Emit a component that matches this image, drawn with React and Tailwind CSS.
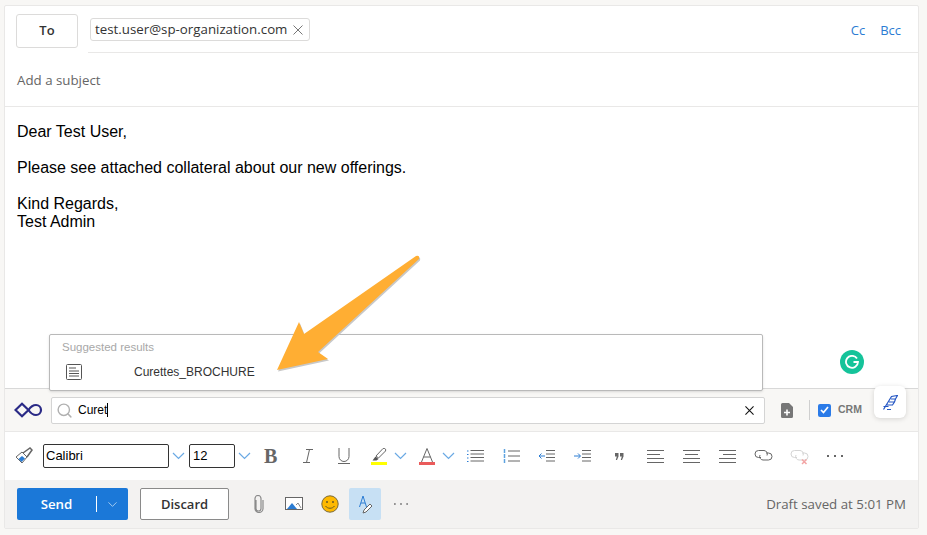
import React from 'react';
import { Search, ChevronDown } from 'lucide-react';

const segoe = { fontFamily: '"Open Sans", "Noto Sans", sans-serif' };
const arial = { fontFamily: '"Liberation Sans", sans-serif' };

const Chevron = ({ className = '' }) => (
  <svg width="13" height="8" viewBox="0 0 13 8" fill="none" className={className}>
    <path d="M1 1l5.500 5.500L12 1" stroke="#6aa9e4" strokeWidth="1.200" />
  </svg>
);

const Cross = ({ size, color, width = 1 }) => (
  <svg width={size} height={size} viewBox="0 0 10 10" fill="none" stroke={color} strokeWidth={width}>
    <path d="M.5 .5l9 9M9.500 .5l-9 9" />
  </svg>
);

const Dots = ({ w, color, r, className = '' }) => (
  <svg width={w} height="4" viewBox={`0 0 ${w} 4`} fill={color} className={className}>
    <circle cx={r} cy="2" r={r} />
    <circle cx={w / 2} cy="2" r={r} />
    <circle cx={w - r} cy="2" r={r} />
  </svg>
);

const Lines = ({ rows }) => (
  <svg width="17" height="13" viewBox="0 0 17 13" fill="none" stroke="#666" strokeWidth="1">
    {rows.map((r, i) => (
      <path key={i} d={`M${r[0]} ${i * 4 + 0.5}H${r[1]}`} />
    ))}
  </svg>
);

const BulletList = () => (
  <svg width="17" height="12" viewBox="0 0 17 12" fill="none">
    <path d="M3.500 .5H17M3.500 4H17M3.500 7.500H17M3.500 11H17" stroke="#666" />
    <path d="M0 1h1.500M0 4.500h1.500M0 8h1.500M0 11.500h1.500" stroke="#2b7cd3" />
  </svg>
);

const NumberList = () => (
  <svg width="17" height="14" viewBox="0 0 17 14" fill="none">
    <path d="M5 2h12M5 7h12M5 12h12" stroke="#666" />
    <path d="M1.500 0v14" stroke="#5da2e0" strokeWidth="1.500" strokeDasharray="4 1" />
  </svg>
);

const Indent = ({ flip }) => (
  <svg width="18" height="12" viewBox="0 0 18 12" fill="none">
    <path d="M8 0.500h9M8 4h9M8 7.500h9M8 11h9" stroke="#666" />
    {flip ? (
      <path d="M0 6h6M4 3.500L6.500 6 4 8.500" stroke="#2b7cd3" />
    ) : (
      <path d="M7 6H1M3.500 3.500L1 6l2.500 2.500" stroke="#2b7cd3" />
    )}
  </svg>
);

const LinkIcon = ({ color = '#666', off }) => (
  <svg width="19" height="17" viewBox="0 0 19 17" fill="none" stroke={color} strokeWidth="1">
    <path d="M7 9.500H4.500a3.500 3.500 0 0 1 0-7H10a3.500 3.500 0 0 1 3 5" />
    <path d="M12 5h2.500a3.500 3.500 0 0 1 0 7H9a3.500 3.500 0 0 1-3-5" />
    {off && <path d="M12 11.500l4.500 4.500M16.500 11.500L12 16" stroke="#f3a5a5" strokeWidth="1.500" />}
  </svg>
);

export default function App() {
  return (
    <div className="relative w-[927px] h-[535px] overflow-hidden bg-[#f8f7f5] pt-[5px] pl-[4px]" style={segoe}>
      <div className="w-[915px] h-[524px] flex flex-col bg-white border border-[#e9e8e7] rounded-[2px]">
        {/* To row */}
        <div className="h-[47px] flex shrink-0 pl-[11px] pr-[17px] pt-[8px]">
          <button className="w-[62px] h-[34px] bg-white border border-[#dcdbda] rounded-[3px] text-[13px] font-semibold text-[#333]">
            To
          </button>
          <div className="flex-1 ml-[10px] flex justify-between h-[39px] border-b border-[#e9e8e7] -mr-[17px] pr-[17px]">
            <div className="ml-[2px] mt-[4px] h-[23px] flex items-center gap-[6px] pl-[4px] pr-[6px] border border-[#dcdbda] rounded-[3px] text-[13.300px] text-[#333]">
              test.user@sp-organization.com
              <Cross size={10} color="#777" />
            </div>
            <div className="flex gap-[15px] mt-[7px] text-[13px] text-[#2b7cd3] h-[18px]">
              <span>Cc</span>
              <span>Bcc</span>
            </div>
          </div>
        </div>

        {/* subject */}
        <div className="h-[54px] shrink-0 flex items-center pl-[12px] pt-[2px] text-[13.300px] text-[#666] border-b border-[#e9e8e7]">
          Add a subject
        </div>

        {/* body */}
        <div className="flex-1 pl-[12px] pt-[16px] text-[16px] leading-[18px] text-black" style={arial}>
          <p>Dear Test User,</p>
          <p className="mt-[18px]">Please see attached collateral about our new offerings.</p>
          <p className="mt-[18px]">Kind Regards,</p>
          <p>Test Admin</p>
        </div>

        {/* search bar */}
        <div className="h-[44px] shrink-0 flex items-center bg-[#f8f7f5] border-t border-[#d8d8d8] border-b-[#e9e8e7] border-b pl-[9px]" style={arial}>
          <svg width="29" height="16" viewBox="0 0 29 16" fill="none" stroke="#2a2a86" strokeWidth="2.200">
            <path d="M1.500 8L8 1.800 14.500 8 8 14.200z" />
            <path d="M14.500 8c2-3 4.500-5 7.500-5a5 5 0 0 1 0 10c-3 0-5.500-2-7.500-5z" />
          </svg>
          <div className="ml-[8px] w-[714px] h-[27px] flex items-center bg-white border border-[#d4d4d4] rounded-[2px] pl-[4px] pr-[10px] text-[12px] text-black">
            <Search size={17} strokeWidth={2} className="text-[#b0b0b0]" />
            <span className="ml-[5px]">Curet</span>
            <span className="w-px h-[14px] bg-black"></span>
            <span className="ml-auto"><Cross size={9} color="#111" width={1.200} /></span>
          </div>
          <svg width="12" height="15" viewBox="0 0 12 15" className="ml-[16px]">
            <path d="M1.500 0H8l4 4v9.500a1.500 1.500 0 0 1-1.500 1.500h-9A1.500 1.500 0 0 1 0 13.500v-12A1.500 1.500 0 0 1 1.500 0z" fill="#777" />
            <path d="M6 6.500v6M3 9.500h6" stroke="#fff" strokeWidth="1.600" />
          </svg>
          <div className="ml-[16px] w-px h-[20px] bg-[#cfcfcf]"></div>
          <div className="ml-[8px] w-[13px] h-[13px] rounded-[2px] bg-[#2b7be8] flex items-center justify-center">
            <svg width="9" height="8" viewBox="0 0 9 8" fill="none">
              <path d="M1 4l2.500 2.500L8 1" stroke="#fff" strokeWidth="1.700" />
            </svg>
          </div>
          <span className="ml-[7px] text-[10.500px] font-bold text-[#777]">CRM</span>
        </div>

        {/* format toolbar */}
        <div className="h-[48px] shrink-0 flex items-center pl-[10px] text-[#666]">
          <svg width="18" height="18" viewBox="0 0 18 18" fill="none">
            <path d="M1 10l6-5 5 5-5 6z" fill="#fff" stroke="#666" />
            <path d="M3.500 12l3.500-3 3 2.500-3.500 3.500z" fill="#2b7cd3" />
            <path d="M8 6l7-5 2 2-5 7" stroke="#666" strokeWidth="1.500" />
          </svg>
          <div className="ml-[10px] w-[126px] h-[24px] border border-[#333] rounded-[2px] flex items-center pl-[2px] text-[13px] text-black" style={arial}>
            Calibri
          </div>
          <Chevron className="ml-[3px]" />
          <div className="ml-[4px] w-[46px] h-[24px] border border-[#333] rounded-[2px] flex items-center pl-[3px] text-[13px] text-black" style={arial}>
            12
          </div>
          <Chevron className="ml-[3px]" />
          <span className="ml-[13px] mr-[2px] w-[13px] text-[20px] leading-none font-bold text-[#666]" style={{ fontFamily: '"Liberation Serif", serif' }}>B</span>
          <svg width="12" height="14" viewBox="0 0 12 14" fill="none" stroke="#666" className="ml-[23px]">
            <path d="M4 .5h7M1 13.500h7M7.500 .5l-3 13" />
          </svg>
          <svg width="12" height="16" viewBox="0 0 12 16" fill="none" stroke="#666" className="ml-[24px]">
            <path d="M1 0v8.500a5 5 0 0 0 10 0V0M0 15.500h12" />
          </svg>
          <div className="ml-[21px] w-[16px] flex flex-col items-center">
            <svg width="15" height="14" viewBox="0 0 15 14">
              <path d="M4 8l7-7.500c1.500-1 3.500 1 2.500 2.500L6.500 10z" fill="none" stroke="#666" />
              <path d="M3.500 8.500l3 2.500-2 1.500H.500z" fill="#555" />
            </svg>
            <div className="w-[16px] h-[3px] bg-[#ffff00]"></div>
          </div>
          <Chevron className="ml-[7px]" />
          <div className="ml-[12px] w-[16px] flex flex-col items-center">
            <svg width="12" height="14" viewBox="0 0 12 14" fill="none" stroke="#666">
              <path d="M.5 14L6 .5 11.500 14M2.500 9h7" />
            </svg>
            <div className="w-[16px] h-[3px] bg-[#ea5b5b]"></div>
          </div>
          <Chevron className="ml-[7px]" />
          <div className="ml-[12px]"><BulletList /></div>
          <div className="ml-[19px]"><NumberList /></div>
          <div className="ml-[18px]"><Indent /></div>
          <div className="ml-[18px]"><Indent flip /></div>
          <svg width="9" height="7" viewBox="0 0 9 7" fill="#666" className="ml-[23px]">
            <path d="M0 0h3.500v3.500L2 7H.8L1.800 3.500H0zM5 0h3.500v3.500L7 7H5.800l1-3.500H5z" />
          </svg>
          <div className="ml-[23px]"><Lines rows={[[0, 17], [0, 13], [0, 17], [0, 17]]} /></div>
          <div className="ml-[19px]"><Lines rows={[[0, 17], [2, 15], [0, 17], [0, 17]]} /></div>
          <div className="ml-[19px]"><Lines rows={[[0, 17], [4, 17], [0, 17], [0, 17]]} /></div>
          <div className="ml-[18px]"><LinkIcon /></div>
          <div className="ml-[17px]"><LinkIcon color="#d4d4d4" off /></div>
          <Dots w={16} color="#333" r={1} className="ml-[18px]" />
        </div>

        {/* bottom bar */}
        <div className="h-[48px] shrink-0 flex items-center bg-[#f3f2f1] pl-[12px] pr-[12px]">
          <div className="w-[111px] h-[32px] flex items-center bg-[#1b78d8] rounded-[2px] text-white text-[13.300px] font-semibold">
            <span className="w-[79px] text-center pt-[2px]">Send</span>
            <span className="w-px h-[16px] bg-white"></span>
            <ChevronDown size={15} strokeWidth={1.200} className="ml-[8px] text-[#cfe4f7]" />
          </div>
          <button className="ml-[12px] w-[89px] h-[32px] pt-[1px] bg-white border border-[#8a8a8a] rounded-[2px] text-[13px] font-semibold text-[#333]">
            Discard
          </button>
          <svg width="11" height="18" viewBox="0 0 11 18" fill="none" stroke="#8a8a8a" strokeWidth="1.200" className="ml-[24px]">
            <path d="M3 5v8.500a2.500 2.500 0 0 0 5 0V3.500a3 3 0 0 0-6 0v10a4 4 0 0 0 8 0V5" />
          </svg>
          <svg width="18" height="14" viewBox="0 0 18 14" className="ml-[21px]">
            <rect x=".5" y=".5" width="17" height="12" fill="#fff" stroke="#666" />
            <path d="M2 12l5-6 5 6z" fill="#2b7cd3" />
            <path d="M11 8l2-2 3 5" fill="none" stroke="#888" />
          </svg>
          <svg width="18" height="18" viewBox="0 0 18 18" className="ml-[18px]">
            <circle cx="9" cy="9" r="8.200" fill="#ffb900" stroke="#7a6a3a" />
            <circle cx="6" cy="7" r="1" fill="#6b5a20" />
            <circle cx="12" cy="7" r="1" fill="#6b5a20" />
            <path d="M4.500 11c2 3 7 3 9 0" fill="none" stroke="#6b5a20" />
          </svg>
          <div className="ml-[10px] w-[32px] h-[32px] bg-[#c7e0f4] rounded-[2px] flex items-center justify-center">
            <svg width="13" height="19" viewBox="0 0 13 19" fill="none">
              <path d="M.5 12L4 1l3.500 11M2 8h4" stroke="#2b7cd3" />
              <path d="M4 18l1-3 6-6 2 2-6 6z" stroke="#666" fill="#fff" />
            </svg>
          </div>
          <Dots w={14} color="#777" r={0.9} className="ml-[13px]" />
          <span className="ml-auto pt-[2px] text-[13.300px] text-[#666]">Draft saved at 5:01 PM</span>
        </div>
      </div>

      {/* suggestions popup */}
      <div className="absolute left-[49px] top-[334px] w-[714px] h-[57px] bg-white border border-[#b9b9b9] rounded-[2px] shadow-sm" style={arial}>
        <p className="pl-[12px] pt-[5px] text-[11.500px] leading-[14px] text-[#a8a8a8]">Suggested results</p>
        <div className="flex items-center pl-[16px] mt-[10px] h-[16px]">
          <svg width="16" height="16" viewBox="0 0 16 16" fill="none" stroke="#555">
            <rect x=".5" y=".5" width="15" height="15" rx="1" />
            <path d="M3 4h7M3 7h10M3 9.500h10M3 12h10" />
          </svg>
          <span className="ml-[52px] text-[12px] text-[#333]">Curettes_BROCHURE</span>
        </div>
      </div>

      {/* grammarly badge */}
      <div className="absolute left-[840px] top-[350px] w-[24px] h-[24px] rounded-full bg-[#15c39a] flex items-center justify-center">
        <svg width="14" height="14" viewBox="0 0 14 14" fill="none" stroke="#fff" strokeWidth="1.800">
          <path d="M12 3.500A6 6 0 1 0 13 7H8.500" />
        </svg>
      </div>

      {/* floating pen button */}
      <div className="absolute left-[874px] top-[386px] w-[32px] h-[32px] rounded-[6px] bg-white shadow-[0_1px_5px_rgba(0,0,0,0.15)] flex items-center justify-center">
        <svg width="15" height="15" viewBox="0 0 15 15" fill="none" stroke="#2456c4" strokeWidth="1.200">
          <path d="M.5 14.500L8.500 1.500 14.500 .5 12.500 4H8M12.500 4l-1 3H6M11.500 7l-2 3H4M.5 11.500h5M4 14.500h4" />
        </svg>
      </div>

      {/* arrow annotation */}
      <svg width="927" height="535" viewBox="0 0 927 535" className="absolute left-0 top-0 pointer-events-none">
        <path d="M277 370L299 322L304 334L416 256Q420 255 419 259L318 352L328 359Z" fill="#c8c8c8" transform="translate(1 1.500)" />
        <path d="M277 370L299 322L304 334L416 256Q420 255 419 259L318 352L328 359Z" fill="#ffae33" />
      </svg>
    </div>
  );
}
